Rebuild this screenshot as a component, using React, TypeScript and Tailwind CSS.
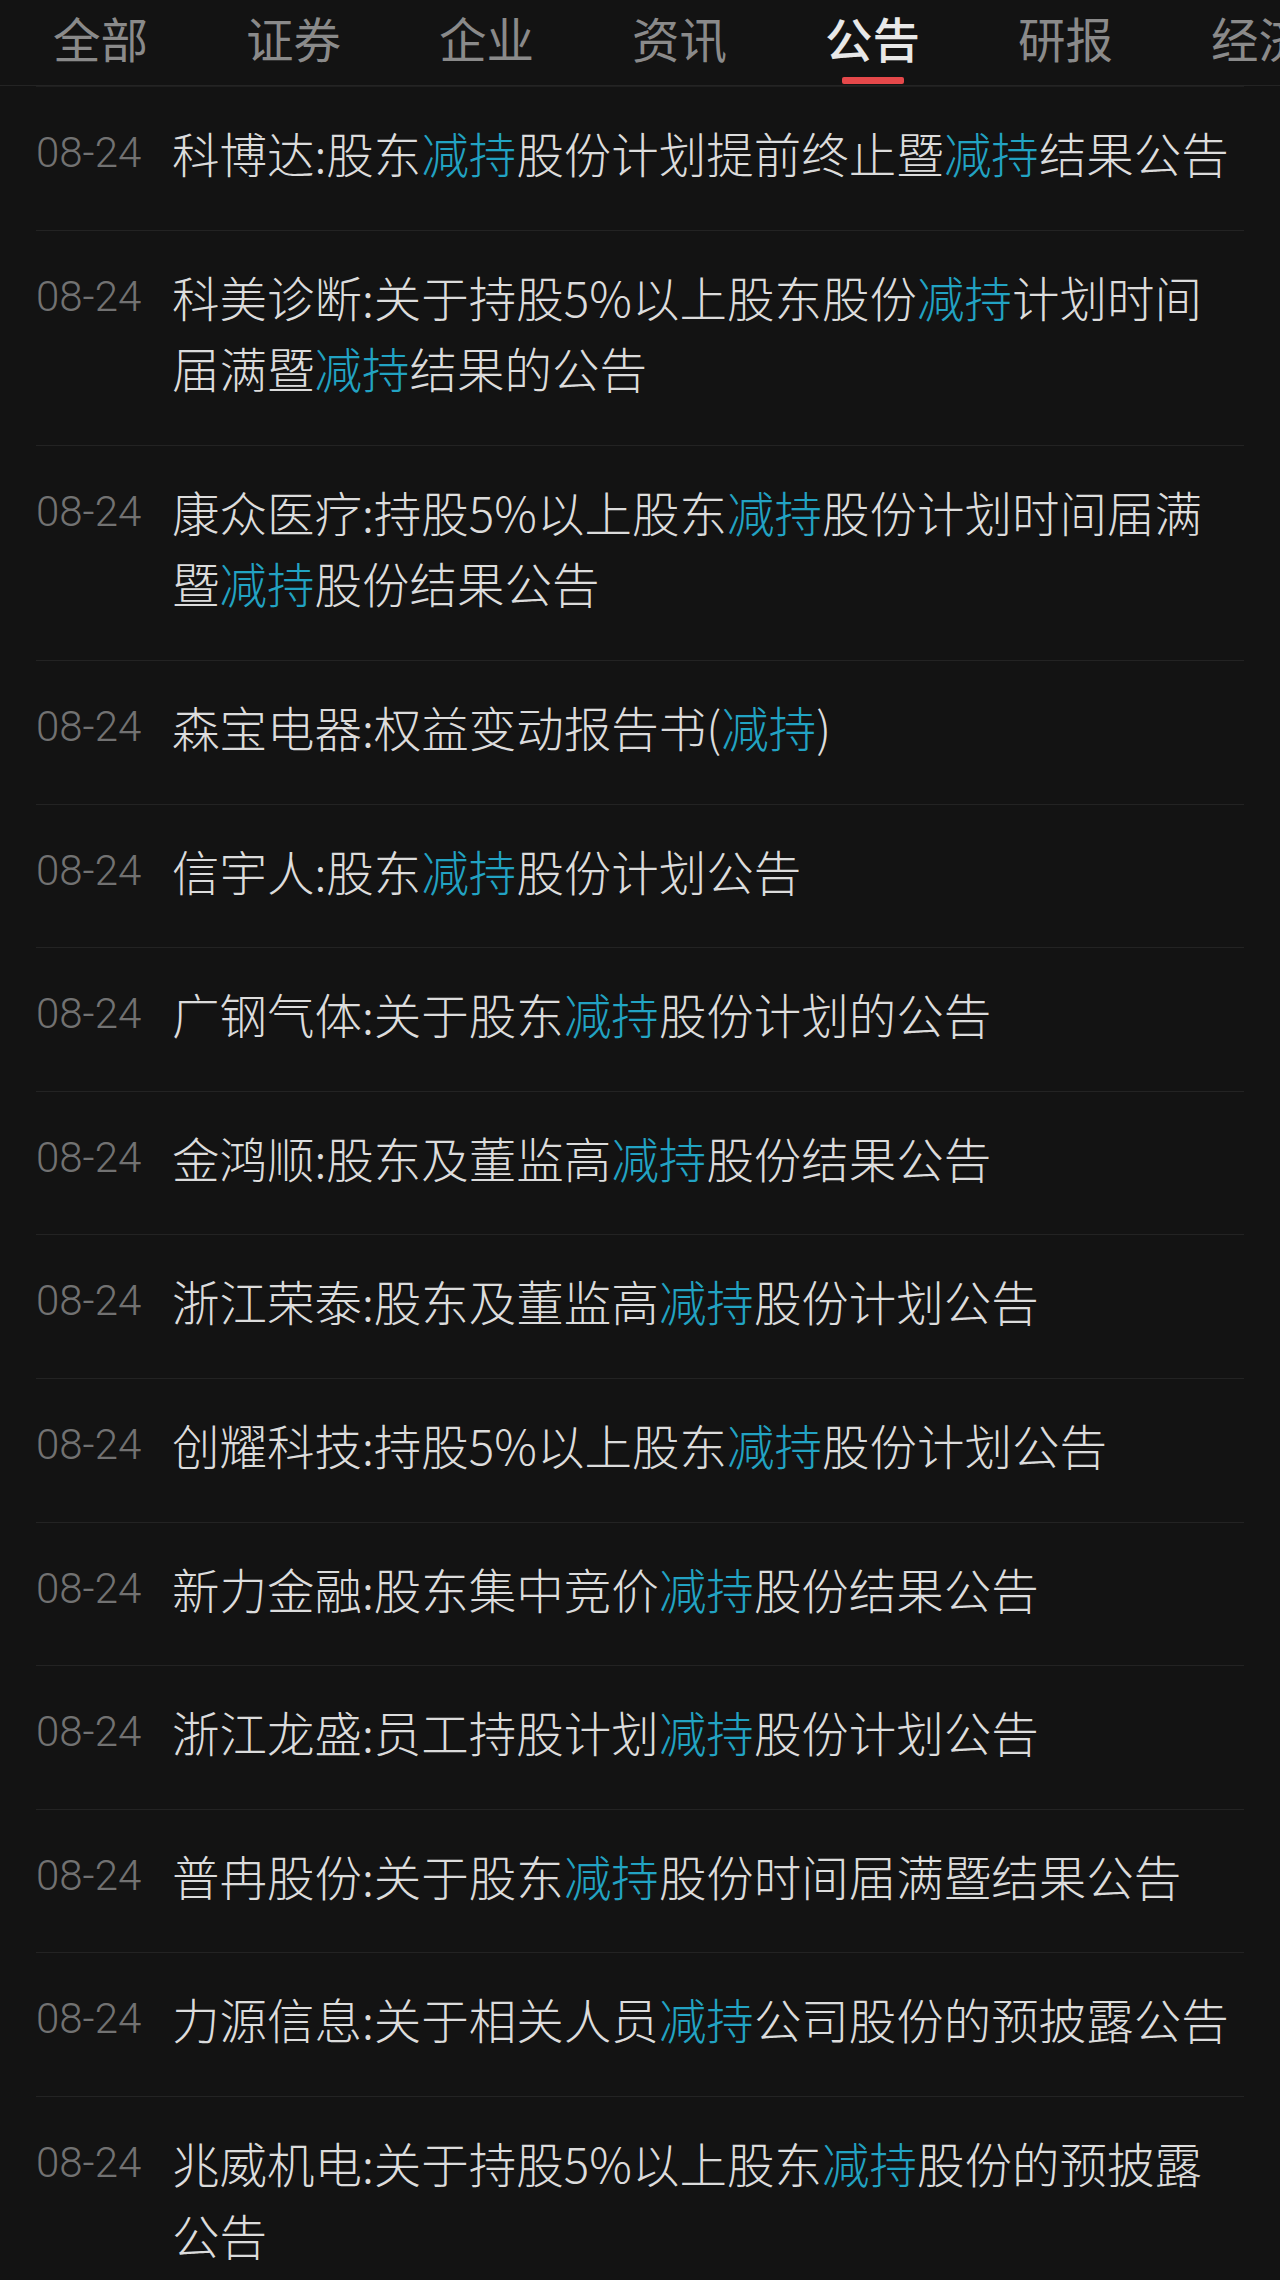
import React from 'react';

const TABS = ['全部', '证券', '企业', '资讯', '公告', '研报', '经济'];
const ACTIVE = '公告';
const KEY = '减持';

const NOTICES = [
  '科博达:股东减持股份计划提前终止暨减持结果公告',
  '科美诊断:关于持股5%以上股东股份减持计划时间届满暨减持结果的公告',
  '康众医疗:持股5%以上股东减持股份计划时间届满暨减持股份结果公告',
  '森宝电器:权益变动报告书(减持)',
  '信宇人:股东减持股份计划公告',
  '广钢气体:关于股东减持股份计划的公告',
  '金鸿顺:股东及董监高减持股份结果公告',
  '浙江荣泰:股东及董监高减持股份计划公告',
  '创耀科技:持股5%以上股东减持股份计划公告',
  '新力金融:股东集中竞价减持股份结果公告',
  '浙江龙盛:员工持股计划减持股份计划公告',
  '普冉股份:关于股东减持股份时间届满暨结果公告',
  '力源信息:关于相关人员减持公司股份的预披露公告',
  '兆威机电:关于持股5%以上股东减持股份的预披露公告',
];

// 关键词高亮
const Highlight = ({ text }: { text: string }) => {
  const parts = text.split(KEY);
  return (
    <>
      {parts.map((p, i) => (
        <React.Fragment key={i}>
          {p}
          {i < parts.length - 1 && <span className="text-[#22a3c3]">{KEY}</span>}
        </React.Fragment>
      ))}
    </>
  );
};

const App = () => {
  return (
    <div className="min-h-screen bg-[#131313] font-['Noto_Sans_CJK_SC','Noto_Sans',sans-serif] overflow-hidden">
      {/* Tabs */}
      <header className="h-[86px] border-b border-[#242424] flex items-start gap-[98px] pl-[53px] whitespace-nowrap overflow-hidden">
        {TABS.map((t) => {
          const active = t === ACTIVE;
          return (
            <div key={t} className="flex flex-col items-center shrink-0">
              <span
                className={
                  active
                    ? 'text-[47.5px] leading-[75px] font-medium text-[#e8e8e8]'
                    : 'text-[47.5px] leading-[75px] text-[#8a8a8a]'
                }
              >
                {t}
              </span>
              <div
                className={
                  active
                    ? 'mt-[2px] h-[7px] w-[62px] rounded-[2px] bg-[#e5484a]'
                    : 'mt-[2px] h-[7px] w-[62px]'
                }
              />
            </div>
          );
        })}
      </header>

      {/* Notice list */}
      <ul className="mx-[36px] border-t border-[#1f1f1f]">
        {NOTICES.map((n, i) => (
          <li key={i} className="flex items-start pt-[30px] pb-[41px] border-b border-[#232323]">
            <span className="w-[136px] shrink-0 font-['Roboto',sans-serif] font-light text-[42px] leading-[71.6px] text-[#727272]">
              08-24
            </span>
            <p className="flex-1 pr-[10px] font-light text-[47.5px] leading-[71.6px] text-[#dcdcdc]">
              <Highlight text={n} />
            </p>
          </li>
        ))}
      </ul>
    </div>
  );
};

export default App;
